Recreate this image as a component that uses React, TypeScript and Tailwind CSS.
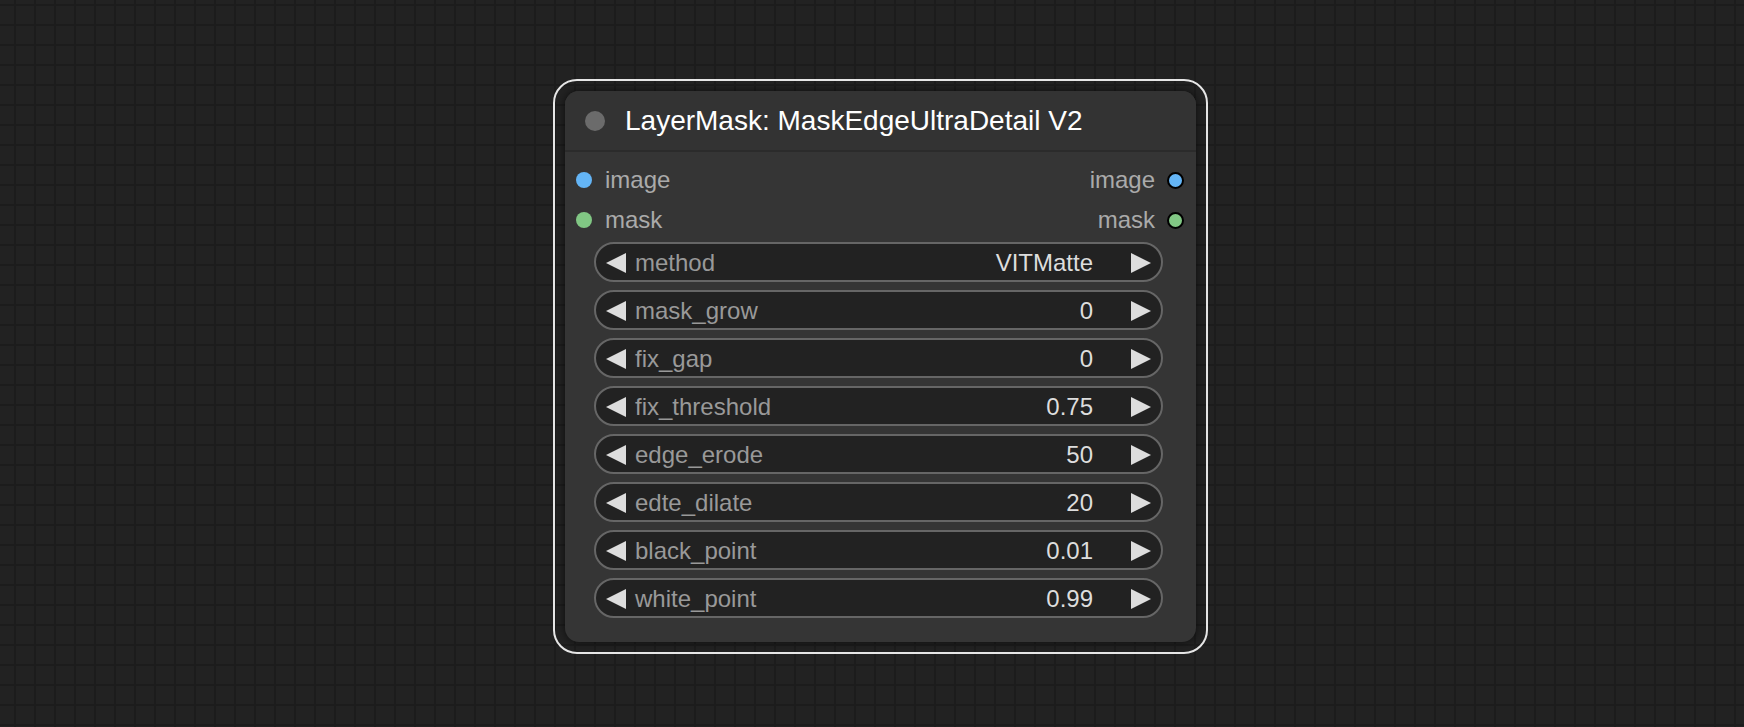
import React from 'react';

const widgets = [
  { label: 'method', value: 'VITMatte' },
  { label: 'mask_grow', value: '0' },
  { label: 'fix_gap', value: '0' },
  { label: 'fix_threshold', value: '0.75' },
  { label: 'edge_erode', value: '50' },
  { label: 'edte_dilate', value: '20' },
  { label: 'black_point', value: '0.01' },
  { label: 'white_point', value: '0.99' },
];

const slots = [
  { name: 'image', color: 'bg-[#64b5f6]' },
  { name: 'mask', color: 'bg-[#81c784]' },
];

function Arrow({ dir }: { dir: 'left' | 'right' }) {
  return (
    <svg width="20" height="20" viewBox="0 0 20 20" className="shrink-0">
      {dir === 'left' ? (
        <polygon points="20,0 0,10 20,20" fill="#dddddd" />
      ) : (
        <polygon points="0,0 20,10 0,20" fill="#dddddd" />
      )}
    </svg>
  );
}

function Widget({ label, value }: { label: string; value: string }) {
  return (
    <div className="flex h-[40px] items-center rounded-full border-2 border-[#666] bg-[#222] pl-[10px] pr-[10px] pt-[1px]">
      <Arrow dir="left" />
      <span className="ml-[9px] text-[#999]">{label}</span>
      <span className="flex-1" />
      <span className="mr-[38px] text-[#ddd]">{value}</span>
      <Arrow dir="right" />
    </div>
  );
}

export default function App() {
  return (
    <main
      className="h-[727px] w-[1744px] overflow-hidden bg-[#222] bg-[linear-gradient(to_right,#1c1c1c_2px,transparent_2px),linear-gradient(to_bottom,#1c1c1c_2px,transparent_2px)] bg-[size:20px_20px] bg-[position:14px_4px] pl-[553px] pt-[79px]"
      style={{ fontFamily: '"Liberation Sans", Arial, sans-serif' }}
    >
      {/* selected node outline */}
      <div className="w-[655px] rounded-[24px] border-2 border-[#e6e6e6] p-[10px]">
        <div className="overflow-hidden rounded-[14px] bg-[#353535] shadow-[0_0_8px_rgba(0,0,0,0.6)]">
          {/* title */}
          <div className="flex h-[61px] items-center border-b-2 border-[#2b2b2b] bg-[#333] pl-[20px]">
            <span className="h-[20px] w-[20px] rounded-full bg-[#6b6b6b]" />
            <span className="ml-[20px] text-[28px] text-white">LayerMask: MaskEdgeUltraDetail V2</span>
          </div>

          {/* slots */}
          <div className="pt-[8px] text-[24px]">
            {slots.map((s) => (
              <div key={s.name} className="flex h-[40px] items-center pl-[11px] pr-[12px]">
                <span className={`h-[16px] w-[16px] rounded-full ${s.color}`} />
                <span className="ml-[13px] text-[#aaa]">{s.name}</span>
                <span className="flex-1" />
                <span className="mr-[12px] text-[#aaa]">{s.name}</span>
                <span className={`h-[17px] w-[17px] rounded-full border-2 border-black ${s.color}`} />
              </div>
            ))}
          </div>

          {/* widgets */}
          <div className="mt-[2px] flex flex-col gap-[8px] pb-[24px] pl-[29px] pr-[33px] text-[24px]">
            {widgets.map((w) => (
              <Widget key={w.label} label={w.label} value={w.value} />
            ))}
          </div>
        </div>
      </div>
    </main>
  );
}
